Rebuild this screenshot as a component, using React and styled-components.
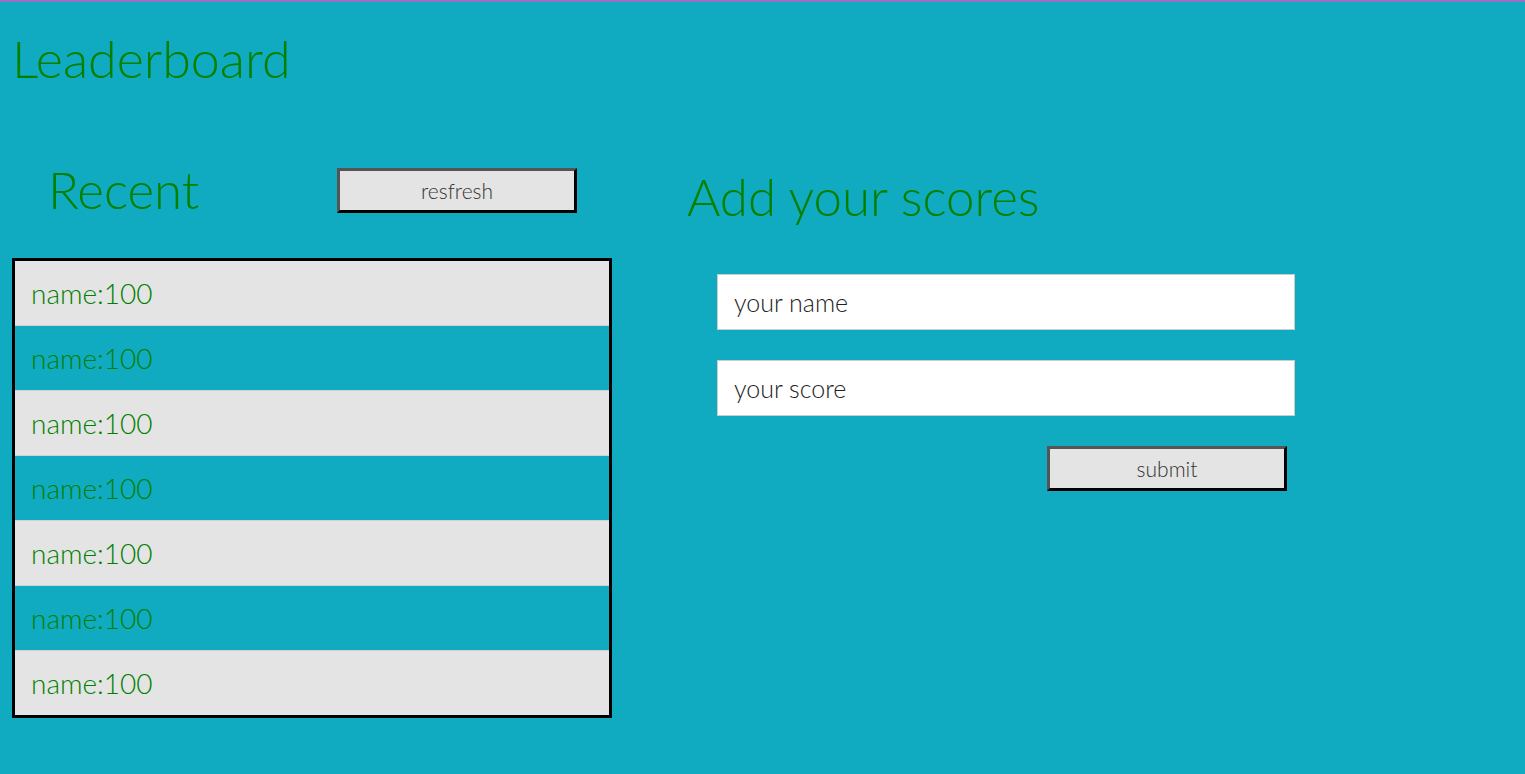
import React from 'react';
import styled, { createGlobalStyle } from 'styled-components';

const GlobalStyle = createGlobalStyle`
  html, body {
    margin: 0;
    padding: 0;
    background-color: #11abc1;
  }
  body {
    font-family: 'Lato', 'Open Sans', sans-serif;
    font-weight: 300;
    border-top: 2px solid #9b6fc0;
  }
`;

const scores = [
  { name: 'name', score: 100 },
  { name: 'name', score: 100 },
  { name: 'name', score: 100 },
  { name: 'name', score: 100 },
  { name: 'name', score: 100 },
  { name: 'name', score: 100 },
  { name: 'name', score: 100 },
];

function App() {
  return (
    <Page>
      <GlobalStyle />
      <Title>Leaderboard</Title>
      <Main>
        <Recent>
          <RecentHead>
            <SubTitle>Recent</SubTitle>
            <Button>resfresh</Button>
          </RecentHead>
          <List>
            {scores.map((s, i) => (
              <Row key={i} odd={i % 2 === 1}>
                {s.name}:{s.score}
              </Row>
            ))}
          </List>
        </Recent>
        <Add>
          <AddTitle>Add your scores</AddTitle>
          <Form onSubmit={(e) => e.preventDefault()}>
            <Input type="text" placeholder="your name" />
            <Input type="text" placeholder="your score" />
            <Actions>
              <Button type="submit">submit</Button>
            </Actions>
          </Form>
        </Add>
      </Main>
    </Page>
  );
}

export default App;

const Page = styled.div`
  padding: 0 12px;
  color: #008000;
`;

const Title = styled.h1`
  margin: 0;
  padding-top: 25px;
  font-size: 52px;
  font-weight: 300;
  line-height: 62px;
`;

const Main = styled.div`
  display: flex;
  gap: 75px;
  margin-top: 71px;
`;

const Recent = styled.section`
  width: 600px;
`;

const RecentHead = styled.div`
  display: flex;
  align-items: center;
  justify-content: space-between;
  padding: 0 35px 0 36px;
  height: 60px;
  margin-bottom: 38px;
`;

const SubTitle = styled.h2`
  margin: 0;
  font-size: 51px;
  font-weight: 300;
  line-height: 56px;
`;

const AddTitle = styled(SubTitle)`
  margin-top: 9px;
`;

const Button = styled.button`
  width: 240px;
  height: 45px;
  background-color: #e4e4e4;
  border: 3px outset #000;
  font-family: 'Lato', sans-serif;
  font-weight: 300;
  font-size: 21px;
  color: #333;
  cursor: pointer;
`;

const List = styled.ul`
  list-style: none;
  margin: 0;
  padding: 0;
  border: 3px solid #000;
`;

const Row = styled.li`
  height: 64px;
  display: flex;
  align-items: center;
  padding-left: 16px;
  font-size: 28px;
  color: #008000;
  background-color: ${(p) => (p.odd ? '#11abc1' : '#e4e4e4')};
  & + & {
    border-top: 1px solid #d2d2d2;
  }
`;

const Add = styled.section`
  flex: 0 0 610px;
`;

const Form = styled.form`
  display: flex;
  flex-direction: column;
  gap: 30px;
  margin: 49px 0 0 30px;
  width: 578px;
`;

const Input = styled.input`
  box-sizing: border-box;
  height: 56px;
  padding: 0 16px;
  border: 1px solid #ccc;
  background: #fff;
  font-family: 'Lato', sans-serif;
  font-weight: 300;
  font-size: 25px;
  outline: none;
  &::placeholder {
    color: #222;
  }
`;

const Actions = styled.div`
  display: flex;
  justify-content: flex-end;
  padding-right: 8px;
`;
